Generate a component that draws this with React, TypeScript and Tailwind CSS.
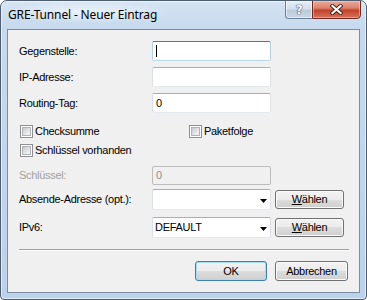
import React from "react";

function TextBox({
  children,
  focused,
  caret,
}: {
  children?: React.ReactNode;
  focused?: boolean;
  caret?: boolean;
}) {
  return (
    <div
      className={
        focused
          ? "w-[119px] h-[20px] bg-white border border-t-[#3d7bad] border-x-[#b5cfe7] border-b-[#b7d9ed] rounded-[2px] flex items-center pl-[2px]"
          : "w-[119px] h-[20px] bg-white border border-t-[#abadb3] border-x-[#dbdfe6] border-b-[#e3e9ef] rounded-[2px] flex items-center pl-[2px]"
      }
    >
      {caret ? <span className="block w-px h-[12px] bg-black ml-px" /> : null}
      {children}
    </div>
  );
}

function Combo({ value }: { value?: string }) {
  return (
    <div className="w-[119px] h-[21px] bg-white border border-t-[#abadb3] border-x-[#dbdfe6] border-b-[#e3e9ef] rounded-[2px] flex items-center pl-[2px] pr-[3px]">
      <span className="flex-1">{value}</span>
      <svg width="7" height="4" viewBox="0 0 7 4" className="mt-[2px]">
        <polygon points="0,0 7,0 3.5,4" fill="#000" />
      </svg>
    </div>
  );
}

function WinButton({
  children,
  w,
  primary,
}: {
  children: React.ReactNode;
  w: "wahl" | "ok" | "abb";
  primary?: boolean;
}) {
  const width =
    w === "wahl" ? "w-[69px] h-[19px]" : w === "ok" ? "w-[72px] h-[20px]" : "w-[73px] h-[20px]";
  return (
    <div
      className={
        width +
        (primary
          ? " border border-[#3c7fb1] shadow-[inset_0_0_0_1px_#a6dcf6]"
          : " border border-[#707070] shadow-[inset_0_0_0_1px_#fbfbfb]") +
        " rounded-[3px] bg-[linear-gradient(180deg,#f2f2f2_0%,#ebebeb_50%,#dddddd_50%,#cfcfcf_100%)] flex items-center justify-center"
      }
    >
      {children}
    </div>
  );
}

function CheckBox() {
  return (
    <div className="w-[13px] h-[13px] border border-[#8e8f8f] bg-white p-px shrink-0">
      <div className="w-[9px] h-[9px] border border-[#b0b4b8] bg-[linear-gradient(135deg,#c6cbd1_0%,#e2e4e7_55%,#f6f6f6_100%)]" />
    </div>
  );
}

export default function App() {
  return (
    <div className="w-[367px] h-[300px] bg-white font-['Liberation_Sans',Arial,sans-serif] text-[11px] tracking-[-0.3px] text-black">
      <div className="w-full h-full flex flex-col border border-[#4d5e72] rounded-t-[7px] rounded-b-[4px] bg-[linear-gradient(180deg,#d6e4f3_0px,#c6d9ee_28px,#bcd2ea_100%)] shadow-[inset_0_0_0_1px_rgba(255,255,255,0.55)] overflow-hidden">
        <div className="h-[28px] shrink-0 flex items-start">
          <div className="pl-[7px] pt-[6px] pr-[14px] font-['Noto_Sans',sans-serif] text-[12px] leading-[16px] tracking-[-0.15px] text-black bg-[radial-gradient(ellipse_at_center,rgba(255,255,255,0.6)_0%,rgba(255,255,255,0)_70%)]">
            GRE-Tunnel - Neuer Eintrag
          </div>
          <div className="ml-auto mr-[5px] flex h-[19px] -mt-px">
            <div className="w-[27px] h-full border border-[#6e8096] border-r-0 rounded-bl-[4px] bg-[linear-gradient(180deg,#e7eef6_0%,#d5e0ec_45%,#bccbdc_55%,#c9d7e6_100%)] shadow-[inset_0_0_0_1px_rgba(255,255,255,0.55)] flex items-center justify-center">
              <span className="font-['DejaVu_Sans',sans-serif] font-bold text-[12px] leading-none text-white [text-shadow:0_0_1px_#3b4a5c,0_0_1px_#3b4a5c,0_0_1px_#3b4a5c]">
                ?
              </span>
            </div>
            <div className="w-[49px] h-full border border-[#6e2a20] rounded-br-[4px] bg-[linear-gradient(180deg,#e9aa9b_0%,#dc8470_40%,#c4432c_55%,#d2735a_100%)] shadow-[inset_0_0_0_1px_rgba(255,220,210,0.45)] flex items-center justify-center">
              <svg width="13" height="11" viewBox="0 0 13 11">
                <path d="M2.5 2 L10.5 9 M10.5 2 L2.5 9" stroke="#4a1d16" strokeWidth="4" strokeLinecap="square" />
                <path d="M2.5 2 L10.5 9 M10.5 2 L2.5 9" stroke="#ffffff" strokeWidth="2.2" strokeLinecap="square" />
              </svg>
            </div>
          </div>
        </div>
        <div className="mx-[6px] mb-[6px] flex-1 border border-[#7d8ca0] bg-[#f0f0f0] flex flex-col pl-[11px]">
          <div className="mt-[11px] h-[20px] flex items-center">
            <div className="w-[133px]">Gegenstelle:</div>
            <TextBox focused caret />
          </div>
          <div className="mt-[6px] h-[20px] flex items-center">
            <div className="w-[133px]">IP-Adresse:</div>
            <TextBox />
          </div>
          <div className="mt-[6px] h-[20px] flex items-center">
            <div className="w-[133px]">Routing-Tag:</div>
            <TextBox>
              <span className="ml-px">0</span>
            </TextBox>
          </div>
          <div className="mt-[12px] h-[13px] flex items-center">
            <div className="w-[170px] flex items-center gap-[2px] pl-px">
              <CheckBox />
              <span>Checksumme</span>
            </div>
            <div className="flex items-center gap-[2px]">
              <CheckBox />
              <span>Paketfolge</span>
            </div>
          </div>
          <div className="mt-[6px] h-[13px] flex items-center gap-[2px] pl-px">
            <CheckBox />
            <span>Schlüssel vorhanden</span>
          </div>
          <div className="mt-[9px] h-[19px] flex items-center">
            <div className="w-[133px] text-[#a0a0a0]">Schlüssel:</div>
            <div className="w-[119px] h-[19px] border border-[#bcbcbc] rounded-[2px] bg-[#f0f0f0] flex items-center pl-[3px] text-[#8d8d8d]">
              0
            </div>
          </div>
          <div className="mt-[4px] h-[21px] flex items-center">
            <div className="w-[133px]">Absende-Adresse (opt.):</div>
            <Combo />
            <div className="ml-[4px]">
              <WinButton w="wahl">
                <span>
                  <span className="underline underline-offset-[1px]">W</span>ählen
                </span>
              </WinButton>
            </div>
          </div>
          <div className="mt-[7px] h-[21px] flex items-center">
            <div className="w-[133px]">IPv6:</div>
            <Combo value="DEFAULT" />
            <div className="ml-[4px]">
              <WinButton w="wahl">
                <span>
                  <span className="underline underline-offset-[1px]">W</span>ählen
                </span>
              </WinButton>
            </div>
          </div>
          <div className="mt-[11px] w-[330px] h-[2px] border-t border-t-[#a0a0a0] border-b border-b-white" />
          <div className="mt-[10px] flex justify-end gap-[8px] mr-[11px]">
            <WinButton w="ok" primary>
              OK
            </WinButton>
            <WinButton w="abb">Abbrechen</WinButton>
          </div>
        </div>
      </div>
    </div>
  );
}
